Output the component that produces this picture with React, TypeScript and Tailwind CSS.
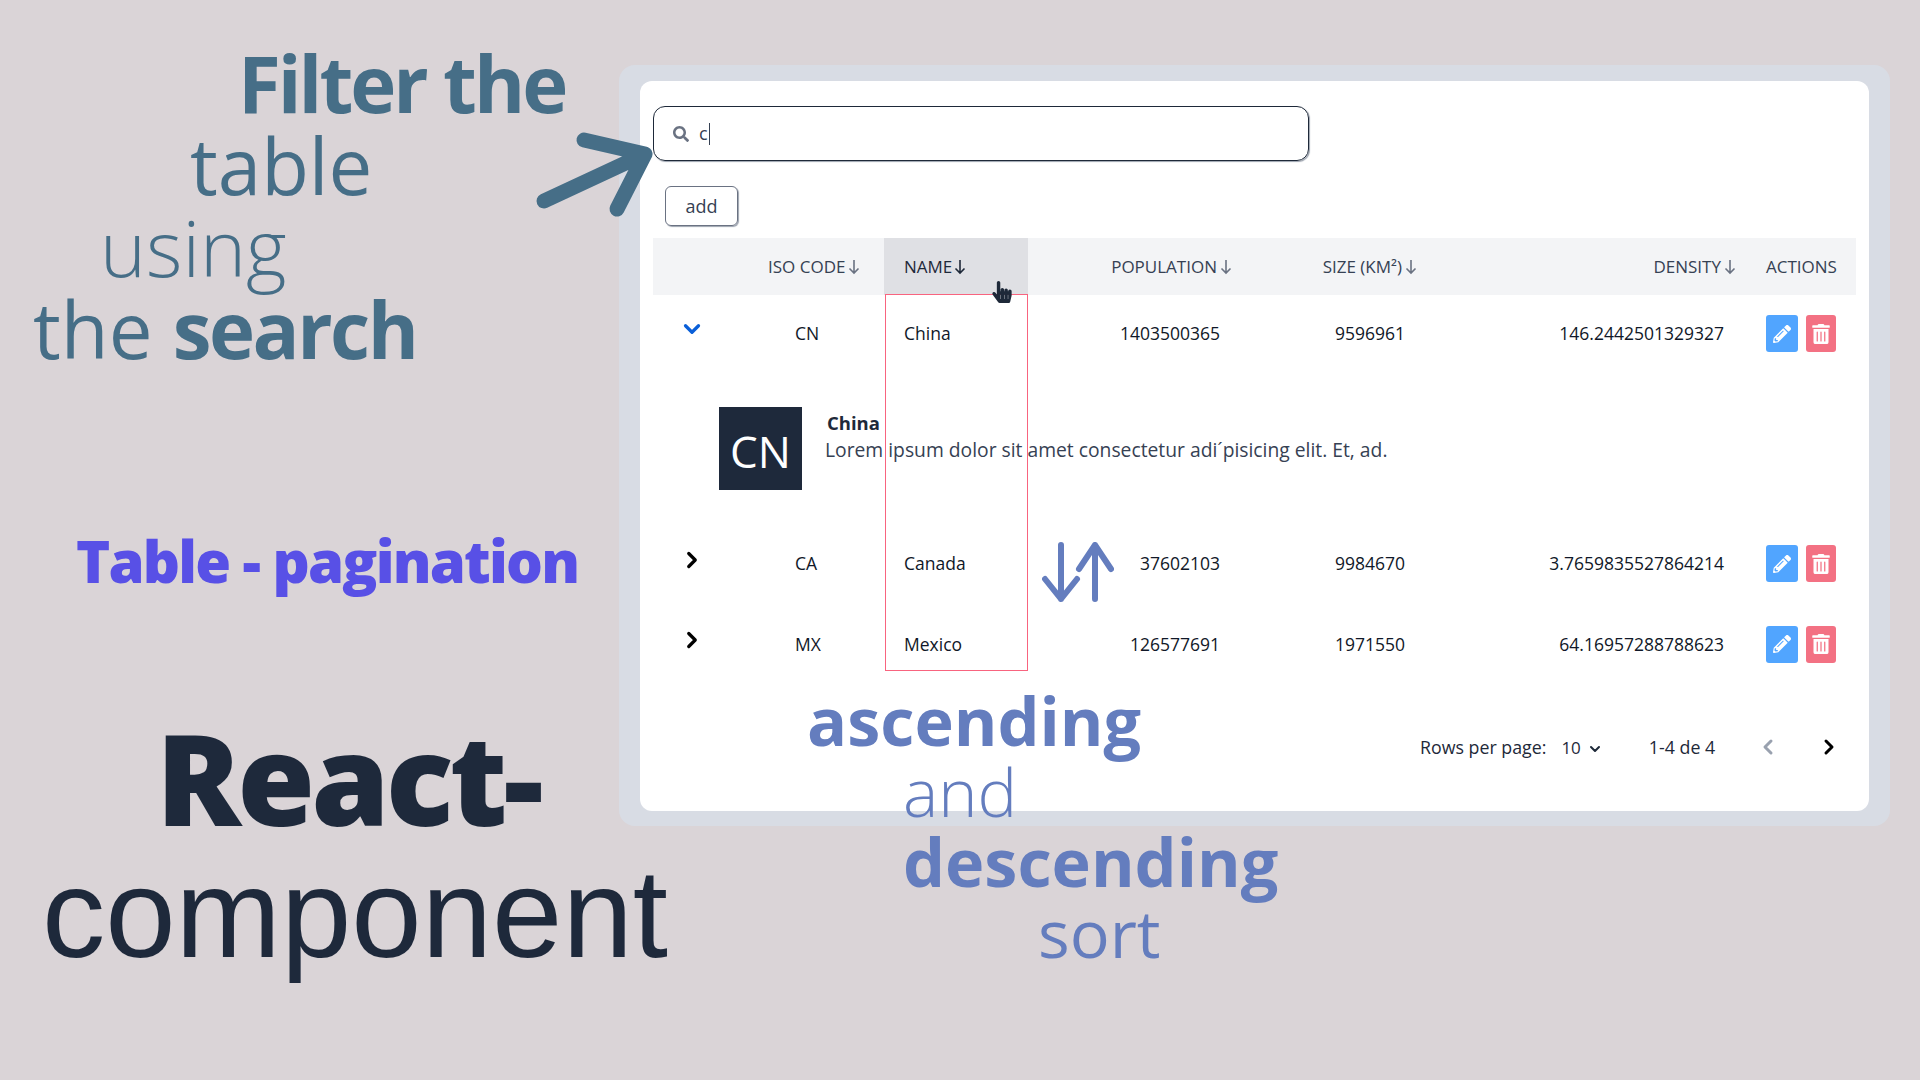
import { ChevronDown, ChevronLeft, ChevronRight } from 'lucide-react';
import { FaPencilAlt, FaSearch, FaTrashAlt, FaHandPointer } from 'react-icons/fa';
import { ReactNode } from 'react';

const sans = "[font-family:'Open_Sans',sans-serif]";

function SortArrow({ dark }: { dark?: boolean }) {
  return (
    <svg width="12" height="16" viewBox="0 0 12 16" fill="none" className={dark ? 'text-gray-800' : 'text-gray-500'} stroke="currentColor" strokeWidth="1.6">
      <path d="M6 1v13M1.5 9.5 6 14l4.5-4.5" />
    </svg>
  );
}

function Actions() {
  return (
    <div className="flex gap-2">
      <button className="flex h-[37px] w-8 items-center justify-center rounded-[3px] bg-[#51a5ff] text-white">
        <FaPencilAlt size={18} />
      </button>
      <button className="flex h-[37px] w-[30px] items-center justify-center rounded-[3px] bg-[#f37183] text-white">
        <FaTrashAlt size={20} />
      </button>
    </div>
  );
}

function Row({ open, last, code, name, pop, size, density }: { open?: boolean; last?: boolean; code: string; name: string; pop: string; size: string; density: string }) {
  return (
    <tr className={`${open ? 'h-[77px]' : last ? 'h-20' : 'h-[81px]'} text-[17.5px] text-gray-900`}>
      <td className="pl-[26px]">
        {open ? (
          <ChevronDown className="-mt-[10px] text-[#0a5fd8]" size={26} strokeWidth={3} />
        ) : (
          <ChevronRight className="-mt-2 text-black" size={26} strokeWidth={3} />
        )}
      </td>
      <td className="pl-[55px]">{code}</td>
      <td className="pl-5">{name}</td>
      <td className="pr-5 text-right">{pop}</td>
      <td className="pr-5 text-right">{size}</td>
      <td className="pr-5 text-right">{density}</td>
      <td className="pl-[22px]"><Actions /></td>
    </tr>
  );
}

function Head({ children, className, dark }: { children: ReactNode; className?: string; dark?: boolean }) {
  return (
    <th className={`font-medium ${className ?? ''}`}>
      {children}
      <span className={`${dark ? 'ml-[2px]' : 'ml-[3px]'} inline-block align-[-2px]`}><SortArrow dark={dark} /></span>
    </th>
  );
}

function TablePanel() {
  return (
    <div className={`h-[761px] w-[1271px] rounded-2xl bg-[#d8dce4] px-[21px] pt-4 ${sans}`}>
      <div className="h-[730px] w-[1229px] rounded-xl bg-white pl-[13px] pt-[25px]">
        <div className="flex h-[55px] w-[656px] items-center gap-[10px] rounded-xl border border-gray-800 pl-[19px] shadow-[1px_1px_1px_#9ca3af]">
          <FaSearch className="text-gray-500" size={16} />
          <span className="text-[18px] text-gray-700">c</span>
          <span className="-ml-[9px] h-[22px] w-px bg-gray-700" />
        </div>
        <button className="ml-3 mt-[25px] block h-10 w-[73px] rounded-md border border-gray-500 text-[18px] text-gray-700 shadow-[1px_1px_1px_#9ca3af]">add</button>
        <table className="mt-3 w-[1203px] table-fixed border-collapse">
          <colgroup>
            <col className="w-[87px]" />
            <col className="w-[144px]" />
            <col className="w-[144px]" />
            <col className="w-[212px]" />
            <col className="w-[185px]" />
            <col className="w-[319px]" />
            <col className="w-[112px]" />
          </colgroup>
          <thead>
            <tr className="h-[57px] bg-[#f3f4f6] text-[17px] text-gray-700">
              <th />
              <Head className="pl-7 text-left">ISO CODE</Head>
              <Head className="bg-[#dfe0e4] pl-5 text-left text-gray-800" dark>NAME</Head>
              <Head className="pr-2 text-right">POPULATION</Head>
              <Head className="pr-2 text-right">SIZE (KM²)</Head>
              <Head className="pr-2 text-right">DENSITY</Head>
              <th className="pl-[22px] text-left font-medium">ACTIONS</th>
            </tr>
          </thead>
          <tbody>
            <Row open code="CN" name="China" pop="1403500365" size="9596961" density="146.2442501329327" />
            <tr className="h-[151px]">
              <td colSpan={7} className="pl-[66px]">
                <div className="mt-[2px] flex items-start gap-[23px]">
                  <div className="flex h-[83px] w-[83px] items-center justify-center bg-[#1e293b] pt-1 text-[44px] text-white">CN</div>
                  <div className="text-[19.3px] leading-[27px] text-gray-700">
                    <p className="ml-[2px] mt-[2px] text-[18.5px] font-bold text-gray-800">China</p>
                    <p>Lorem ipsum dolor sit amet consectetur adi´pisicing elit. Et, ad.</p>
                  </div>
                </div>
              </td>
            </tr>
            <Row code="CA" name="Canada" pop="37602103" size="9984670" density="3.7659835527864214" />
            <Row last code="MX" name="Mexico" pop="126577691" size="1971550" density="64.16957288788623" />
          </tbody>
        </table>
        <div className="mt-[50px] flex items-center text-[17.8px] text-gray-800">
          <span className="ml-[767px]">Rows per page:</span>
          <span className="ml-[15px] text-[17px]">10</span>
          <ChevronDown className="ml-[6px] mt-1" size={16} strokeWidth={3} />
          <span className="ml-[46px]">1-4 de 4</span>
          <ChevronLeft className="ml-[41px] text-gray-400" size={24} strokeWidth={3} />
          <ChevronRight className="ml-[37px] text-black" size={24} strokeWidth={3} />
        </div>
      </div>
    </div>
  );
}

export default function App() {
  return (
    <div className={`relative h-[1080px] w-[1920px] overflow-hidden bg-[#dad4d7] ${sans}`}>
      <div className="flex">
        <div className="w-[619px] shrink-0">
          <div className="mt-[42px] text-[78px] font-light leading-[82px] text-[#466e87]">
            <p className="pl-[238px] font-bold tracking-[-3px]">Filter the</p>
            <p className="pl-[190px] font-normal">table</p>
            <p className="pl-[100px]">using</p>
            <p className="pl-[33px] font-normal">the <span className="font-bold tracking-[-2.5px]">search</span></p>
          </div>
          <p className="ml-[76px] mt-[156px] text-[58px] font-extrabold leading-[70px] tracking-[-1.8px] text-[#5850e6]">Table - pagination</p>
          <p className="ml-[156px] mt-[116px] text-[126px] font-extrabold leading-[130px] tracking-[-4px] text-[#1e293b]">React-</p>
          <p className="ml-[42px] mt-[6px] text-[126.5px] leading-[130px] text-[#1e293b] [font-family:'Liberation_Sans',sans-serif]">component</p>
        </div>
        <div className="mt-[65px]"><TablePanel /></div>
      </div>

      {/* annotations over the table */}
      <svg className="absolute left-[530px] top-[125px]" width="130" height="100" viewBox="0 0 130 100" fill="none" stroke="#466e87" strokeWidth="15" strokeLinecap="round" strokeLinejoin="round">
        <path d="M14 76 115 29M54 15l61 14-28 55" />
      </svg>
      <div className="absolute left-[885px] top-[294px] h-[377px] w-[143px] border-[1.5px] border-[#f8647f]" />
      <FaHandPointer className="absolute left-[991px] top-[281px] text-gray-800" size={22} />
      <svg className="absolute left-[1042px] top-[542px]" width="72" height="60" viewBox="0 0 72 60" fill="none" stroke="#647dbe" strokeWidth="6" strokeLinecap="round" strokeLinejoin="round">
        <path d="M19 3v54M3 37l16 20 16-20M53 57V3M37 27 53 3l16 24" />
      </svg>
      <div className="absolute left-[807px] top-[685px] text-[66.5px] leading-[70.5px] text-[#647dbe]">
        <p className="font-bold">ascending</p>
        <p className="pl-[96px] font-light">and</p>
        <p className="pl-[96px] font-bold">descending</p>
        <p className="pl-[231px] font-medium">sort</p>
      </div>
    </div>
  );
}
